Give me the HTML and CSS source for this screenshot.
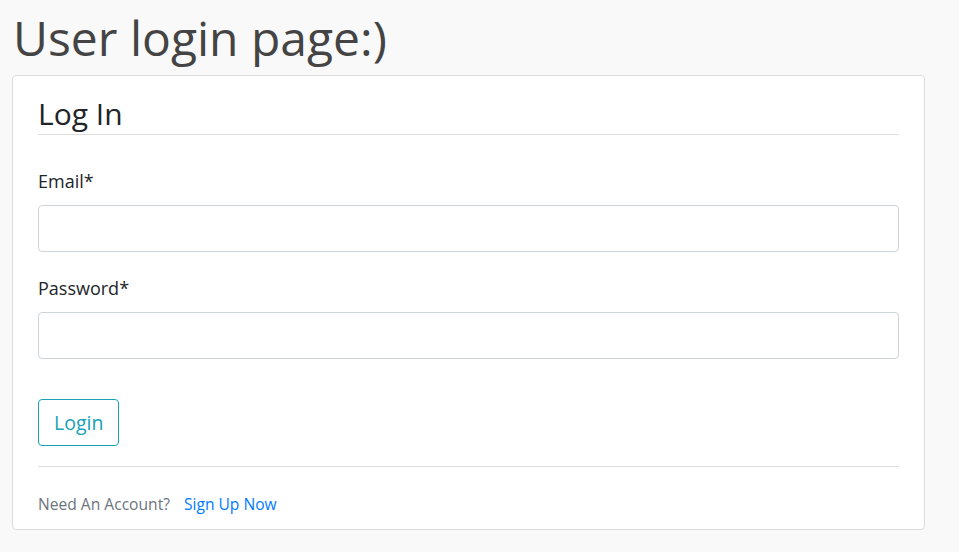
FILE: index.html
```html
<!DOCTYPE html>
<html>
<head>
<meta charset="utf-8">
<link rel="stylesheet" href="styles.css">
</head>
<body>
<h1 class="page-title">User login page:)</h1>
<div class="card">
  <form class="form">
    <h2 class="legend">Log In</h2>
    <div class="group">
      <label class="label">Email*</label>
      <input class="input" type="text">
    </div>
    <div class="group">
      <label class="label">Password*</label>
      <input class="input" type="password">
    </div>
    <div class="actions">
      <button class="btn" type="button">Login</button>
    </div>
  </form>
  <div class="footer">
    <span class="muted">Need An Account?</span><a class="link" href="#">Sign Up Now</a>
  </div>
</div>
</body>
</html>
```

FILE: styles.css
```css
html, body {
  margin: 0;
  padding: 0;
}
body {
  background: #f9f9f9;
  font-family: "Open Sans", "Noto Sans", sans-serif;
  color: #212529;
  padding: 8px 34px 0 12px;
}
.page-title {
  margin: 0 0 7px 1px;
  font-size: 48px;
  font-weight: 400;
  line-height: 60px;
  color: #444;
}
.card {
  background: #fff;
  border: 1px solid #dcdcdc;
  border-radius: 4px;
  padding: 20px 25px 13px 25px;
}
.form {
  margin: 0;
}
.legend {
  margin: 0 0 32px 0;
  font-size: 30px;
  font-weight: 400;
  line-height: 36px;
  padding-bottom: 2px;
  border-bottom: 1px solid #dedede;
  color: #212529;
}
.group {
  display: flex;
  flex-direction: column;
  margin-bottom: 22px;
}
.label {
  font-size: 18px;
  line-height: 29px;
  margin-bottom: 9px;
}
.input {
  height: 47px;
  box-sizing: border-box;
  border: 1px solid #ced4da;
  border-radius: 4px;
  background: #fff;
  font-size: 20px;
  padding: 8px 16px;
}
.actions {
  padding-top: 18px;
  padding-bottom: 20px;
  border-bottom: 1px solid #dedede;
}
.btn {
  height: 47px;
  box-sizing: border-box;
  padding: 0 15px;
  border: 1px solid #17a2b8;
  border-radius: 4px;
  background: transparent;
  color: #17a2b8;
  font-family: inherit;
  font-size: 19.5px;
}
.footer {
  padding-top: 25px;
  font-size: 15.6px;
  line-height: 24px;
}
.muted {
  color: #6c757d;
}
.link {
  color: #007bff;
  text-decoration: none;
  margin-left: 14px;
}
```
